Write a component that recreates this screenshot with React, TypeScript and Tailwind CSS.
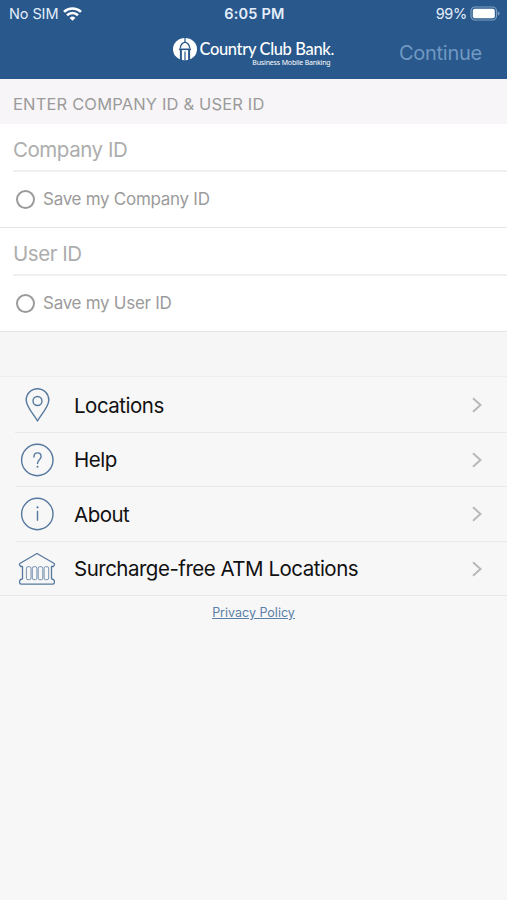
import React from "react";

const PinIcon = () => (
  <svg width="38" height="38" viewBox="0 0 38 38" fill="none" stroke="#55789d" strokeWidth="1.4" strokeLinejoin="round">
    <path d="M19.500 35C16 28.500 8.200 21 8.200 14a11.300 11.300 0 0 1 22.600 0C30.800 21 23 28.500 19.500 35Z" />
    <circle cx="19.500" cy="15" r="4.500" />
  </svg>
);

const HelpIcon = () => (
  <svg width="38" height="38" viewBox="0 0 38 38" fill="none" stroke="#55789d" strokeWidth="1.4">
    <circle cx="19.300" cy="19" r="15.700" />
    <path d="M15.900 16c0-2.500 1.400-4.100 3.600-4.100s3.600 1.500 3.600 3.700c0 3.200-3.600 3.200-3.600 6.800" strokeLinecap="round" />
    <circle cx="19.500" cy="25.700" r="1" fill="#55789d" stroke="none" />
  </svg>
);

const InfoIcon = () => (
  <svg width="38" height="38" viewBox="0 0 38 38" fill="none" stroke="#55789d" strokeWidth="1.4">
    <circle cx="19.300" cy="19" r="15.700" />
    <path d="M19.500 15.800v10" />
    <circle cx="19.500" cy="12.300" r="1.100" fill="#55789d" stroke="none" />
  </svg>
);

const BankIcon = () => (
  <svg width="38" height="38" viewBox="0 0 38 38" fill="none" stroke="#55789d" strokeWidth="1.3" strokeLinejoin="round">
    <path d="M19 3.500 2.200 13.200q-1.500 1 0 2.600l.6.700h1.700v12.300q-2.800.4-2.900 2.500v1.200q0 1.700 1.700 1.700h31.400q1.700 0 1.700-1.700v-1.200q-.1-2.100-2.900-2.500V16.500h1.700l.6-.700q1.500-1.600 0-2.600Z" />
    <rect x="8.400" y="16.700" width="4.600" height="13" rx="1.600" strokeWidth="0.800" />
    <rect x="14.300" y="16.700" width="4.600" height="13" rx="1.600" strokeWidth="0.800" />
    <rect x="20.200" y="16.700" width="4.600" height="13" rx="1.600" strokeWidth="0.800" />
    <rect x="26.100" y="16.700" width="4.600" height="13" rx="1.600" strokeWidth="0.800" />
  </svg>
);

const Logo = () => (
  <div className="flex items-start">
    <svg width="25" height="24" viewBox="0 0 25 24">
      <ellipse cx="12" cy="11.200" rx="12" ry="11.200" fill="#fff" />
      <g stroke="#28588c" fill="none">
        <path d="M7.300 10.500C7.500 7 9 5 12 4.200c3 .8 4.500 2.800 4.700 6.300" strokeWidth="1.300" />
        <path d="M12 0v4.500" strokeWidth="1.200" />
        <path d="M6 11.300h12" strokeWidth="1.600" />
        <path d="M7.900 12v10.500M16.100 12v10.500" strokeWidth="2" />
        <path d="M12 13.500v9.500" strokeWidth="1.200" />
      </g>
    </svg>
    <div className="flex w-[137px] flex-col pl-[2px] text-white">
      <div className="flex h-[20px] items-center whitespace-nowrap pt-[3px] font-['Lato',sans-serif] text-[16.500px] leading-[17px]">
        <span className="tracking-[-0.360px] font-medium">Country Club Bank</span>
        <span>.</span>
      </div>
      <span className="pt-px pr-[4px] text-right whitespace-nowrap font-['Noto_Sans',sans-serif] text-[7px] leading-[8px] tracking-[-0.170px]">
        Business Mobile Banking
      </span>
    </div>
  </div>
);

const Header = () => (
  <header className="h-[79px] bg-[#28588c]">
    <div className="grid h-[27px] grid-cols-3 items-center pr-[7px] pl-[9px] text-[14.500px] text-[#e4eefa]">
      <div className="flex items-center gap-[5px]">
        <span className="tracking-[-0.100px]">No SIM</span>
        <svg width="19" height="14" viewBox="0 0 19 14" fill="none" stroke="#fff" strokeWidth="2.600">
          <path d="M1 4.900a12.300 12.300 0 0 1 17 0" />
          <path d="M4 8.200a8 8 0 0 1 11 0" />
          <path d="M9.500 13.800 6.600 10.900a4.200 4.200 0 0 1 5.800 0Z" fill="#fff" stroke="none" />
        </svg>
      </div>
      <span className="text-center font-semibold tracking-[0.200px]">6:05 PM</span>
      <div className="flex items-center justify-end gap-[3px]">
        <span className="tracking-[-0.300px]">99%</span>
        <svg width="30" height="15" viewBox="0 0 30 15">
          <rect x="1" y="1" width="25.500" height="13" rx="4" fill="none" stroke="#7f9fc1" strokeWidth="1.200" />
          <rect x="2.800" y="2.800" width="22" height="9.400" rx="2" fill="#fff" />
          <path d="M27.800 5.200q1.800 1 1.800 2.300t-1.800 2.300Z" fill="#7f9fc1" />
        </svg>
      </div>
    </div>
    <div className="grid grid-cols-[1fr_162px_1fr] pt-[11px]">
      <div />
      <Logo />
      <button className="pr-[25px] text-right text-[20px] leading-[28px] tracking-[-0.250px] text-[#7199c3]">
        Continue
      </button>
    </div>
  </header>
);

type CredentialProps = {
  placeholder: string;
  saveLabel: string;
};

const Credential = ({ placeholder, saveLabel }: CredentialProps) => (
  <div className="h-[104px] border-b border-[#e4e4e4] bg-white">
    <div className="ml-[13px] flex h-[48px] items-center border-b-2 border-[#f0f0f0] pt-[7px] text-[20.500px] tracking-[-0.450px] text-[#adadad]">
      {placeholder}
    </div>
    <div className="flex h-[55px] items-center gap-[8px] pl-[16px] text-[17px] tracking-[-0.280px] text-[#9b9b9b]">
      <span className="h-[19px] w-[19px] rounded-full border-2 border-[#9b9b9b]" />
      <span>{saveLabel}</span>
    </div>
  </div>
);

const menuItems = [
  { label: "Locations", icon: <PinIcon /> },
  { label: "Help", icon: <HelpIcon /> },
  { label: "About", icon: <InfoIcon /> },
  { label: "Surcharge-free ATM Locations", icon: <BankIcon /> },
];

const App = () => {
  return (
    <div className="min-h-[900px] w-full bg-[#f8f7f8] font-['Inter',sans-serif]">
      <Header />
      <div className="flex h-[45px] items-center bg-[#f7f5f7] pt-[5px] pl-[13px] text-[16.500px] tracking-[0.160px] text-[#9b9b9b]">
        ENTER COMPANY ID &amp; USER ID
      </div>
      <Credential placeholder="Company ID" saveLabel="Save my Company ID" />
      <Credential placeholder="User ID" saveLabel="Save my User ID" />
      <div className="h-[45px] border-b border-[#eeedee] bg-[#f7f6f7]" />
      <ul className="border-b border-[#e9e8e9]">
        {menuItems.map((item, index) => (
          <li key={item.label} className="h-[54.500px] pl-[15px]">
            <div
              className={
                index === 0
                  ? "flex h-full items-center pt-[2px] pl-[3px]"
                  : "flex h-full items-center border-t border-[#ebeaeb] pt-px pl-[3px]"
              }
            >
              {item.icon}
              <span className="ml-[18px] flex-1 pt-[2px] text-[20.500px] tracking-[-0.500px] text-[#111]">
                {item.label}
              </span>
              <svg
                className="mr-[24px]"
                width="12"
                height="16"
                viewBox="0 0 12 16"
                fill="none"
                stroke="#b9b8b9"
                strokeWidth="2"
              >
                <path d="M2 1.200 9.500 8 2 14.800" />
              </svg>
            </div>
          </li>
        ))}
      </ul>
      <div className="flex justify-center pt-[8px]">
        <a href="#privacy" className="text-[12.500px] leading-[18px] text-[#5a7fa8] underline">
          Privacy Policy
        </a>
      </div>
    </div>
  );
};

export default App;
